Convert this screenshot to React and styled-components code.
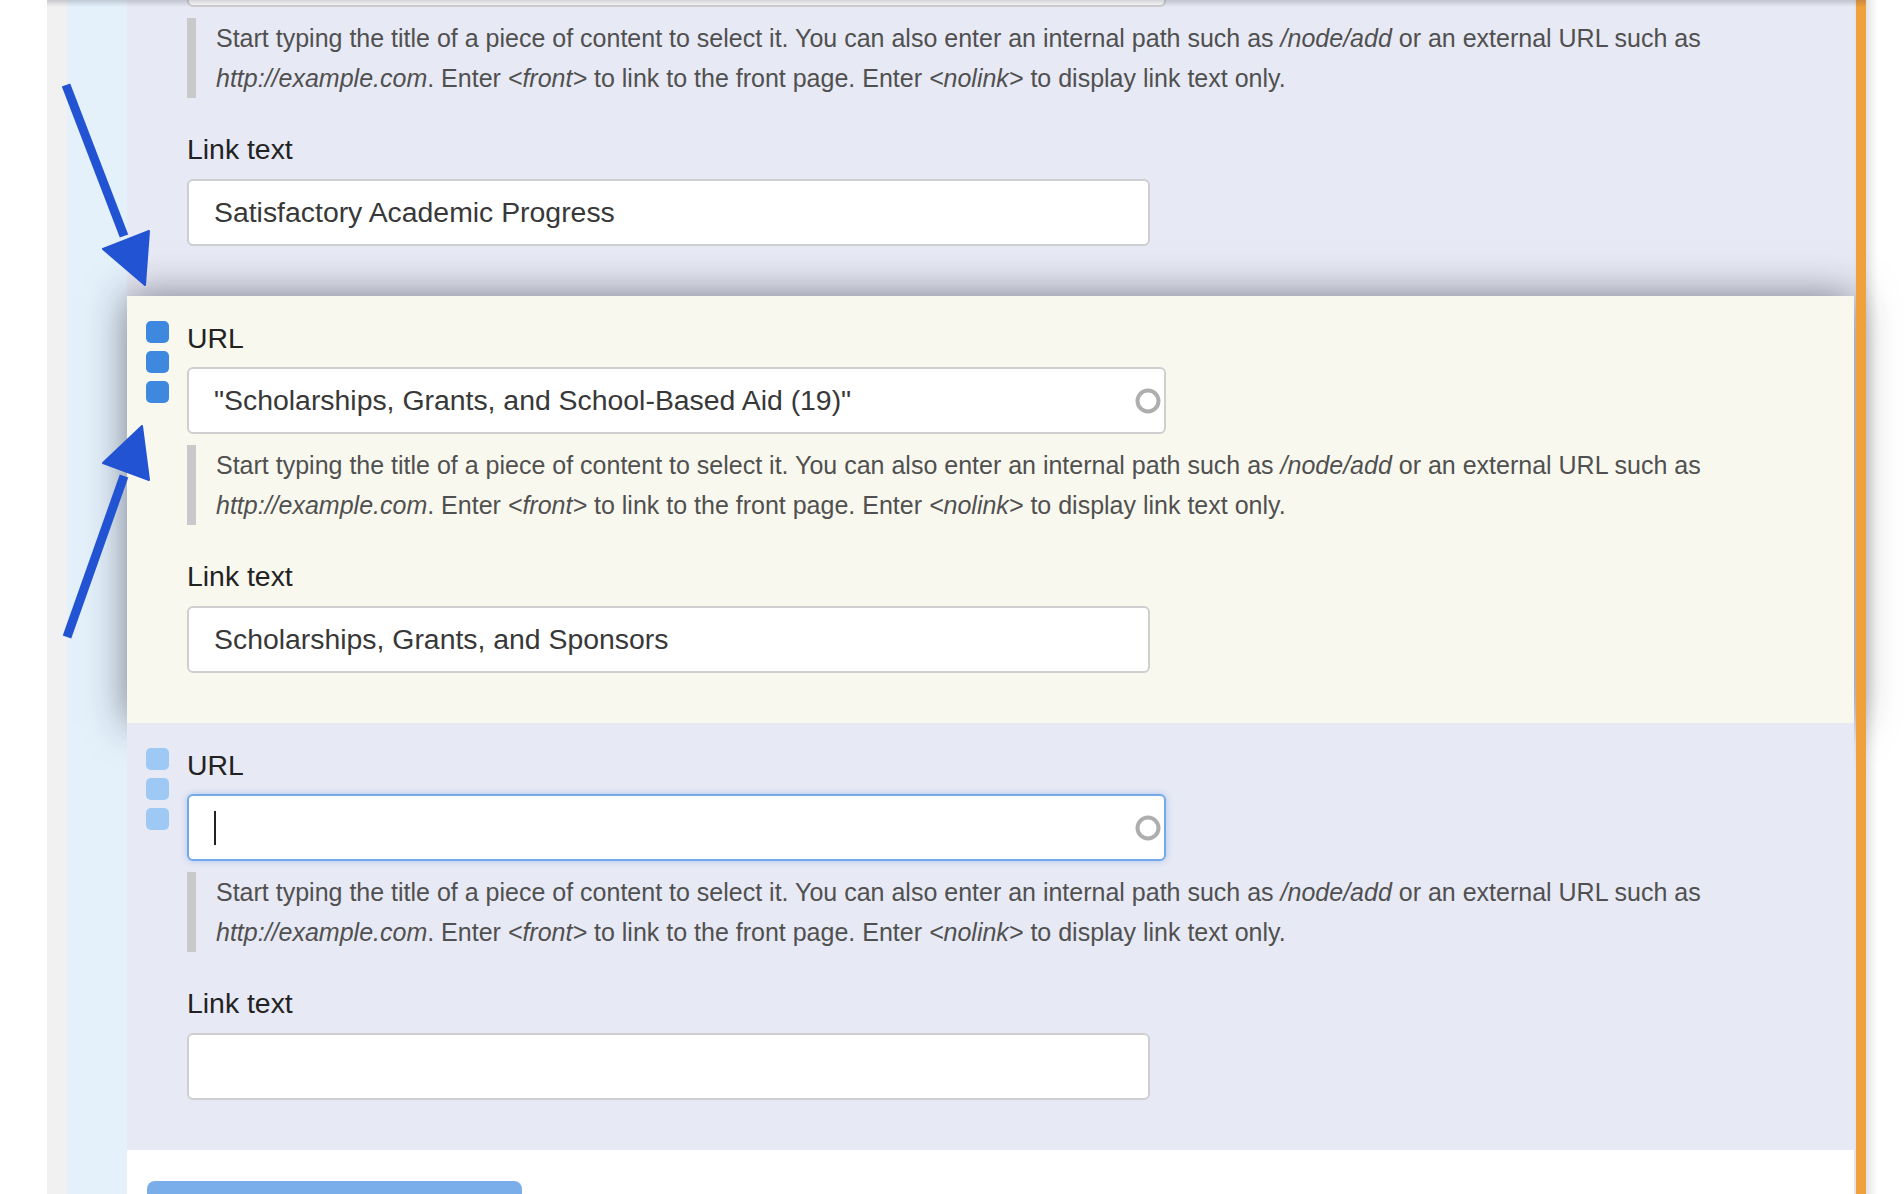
import React from "react";
import styled, { createGlobalStyle, css } from "styled-components";

const GlobalStyle = createGlobalStyle`
  html, body {
    margin: 0;
    padding: 0;
    overflow: hidden;
    background: #ffffff;
  }
  body {
    font-family: "Liberation Sans", Arial, Helvetica, sans-serif;
    color: #222;
  }
  * { box-sizing: border-box; }
`;

const Frame = styled.div`
  position: relative;
  display: flex;
  width: 100%;
  height: 100vh;
  overflow: hidden;
  background: #ffffff;
`;

const LeftGutter = styled.div`
  flex: 0 0 47px;
  background: #ffffff;
`;

const Workspace = styled.div`
  position: relative;
  flex: 0 0 1819px;
  display: flex;
  &::before {
    content: "";
    position: absolute;
    left: 0;
    right: 0;
    top: 0;
    height: 7px;
    background: linear-gradient(rgba(60, 60, 80, 0.22), rgba(60, 60, 80, 0));
    z-index: 3;
    pointer-events: none;
  }
`;

const Rail = styled.div`
  flex: 0 0 20px;
  background: #f1f1f1;
`;

const Canvas = styled.div`
  flex: 1;
  min-width: 0;
  display: flex;
  flex-direction: column;
  padding-left: 60px;
  padding-right: 2px;
  background: linear-gradient(to right, #e4f1fb 0, #e4f1fb 60px, #e2e5ef 60px);
`;

const OrangeBar = styled.div`
  flex: 0 0 10px;
  background: #f0a03c;
`;

const RightGutter = styled.div`
  flex: 1;
  background: linear-gradient(to right, #e2e2e2 0px, #f3f3f3 6px, #ffffff 12px, #ffffff 100%);
`;

const Form = styled.div`
  flex: 1;
  display: flex;
  flex-direction: column;
  margin-top: -131px;
  background: #ffffff;
`;

const toneStyles = {
  lavender: css`
    background: #e7e9f4;
  `,
  cream: css`
    background: #f9f8ef;
    box-shadow: 0 0 38px rgba(30, 30, 50, 0.55);
  `,
};

const Panel = styled.div`
  display: flex;
  gap: 18px;
  padding: 25px 40px 50px 19px;
  ${(p) => toneStyles[p.$tone]}
`;

const Handles = styled.div`
  flex: 0 0 23px;
  display: flex;
  flex-direction: column;
  gap: 8px;
`;

const Grip = styled.span`
  display: block;
  width: 23px;
  height: 22px;
  border-radius: 5px;
  background: ${(p) => (p.$on ? "#3e88df" : "#9dc9f4")};
`;

const Body = styled.div`
  flex: 1;
  min-width: 0;
  display: flex;
  flex-direction: column;
`;

const Label = styled.div`
  font-size: 28.4px;
  line-height: 34px;
  color: #222;
  margin-top: ${(p) => (p.$spaced ? "34px" : "0")};
`;

const Field = styled.div`
  display: flex;
  align-items: center;
  justify-content: space-between;
  width: ${(p) => p.$width}px;
  height: 67px;
  margin-top: ${(p) => p.$gap}px;
  padding: 0 2px 0 25px;
  background: #ffffff;
  border: 2px solid ${(p) => (p.$focused ? "#74a8e8" : "#cfcfd2")};
  border-radius: 6px;
  box-shadow: ${(p) =>
    p.$focused ? "0 0 6px rgba(90, 150, 230, 0.45)" : "none"};
  font-size: 28.4px;
  color: #383838;
  white-space: nowrap;
`;

const FieldText = styled.span`
  flex: 1;
  overflow: hidden;
`;

const Caret = styled.span`
  display: block;
  width: 2px;
  height: 34px;
  background: #222;
`;

const Spacer = styled.span`
  flex: 1;
`;

const Help = styled.div`
  margin-top: 11px;
  padding-left: 20px;
  border-left: 9px solid #c9c9cb;
  font-size: 25px;
  line-height: 40px;
  color: #505050;
  em {
    font-style: italic;
  }
`;

const ButtonRow = styled.div`
  padding: 31px 0 0 20px;
`;

const AddButton = styled.button`
  width: 375px;
  height: 56px;
  border: none;
  border-radius: 8px;
  background: #7aaeea;
`;

const ArrowLayer = styled.svg`
  position: absolute;
  left: 0;
  top: 0;
  width: 1904px;
  height: 1194px;
  pointer-events: none;
  z-index: 5;
`;

function Throbber() {
  return (
    <svg width="28" height="28" viewBox="0 0 28 28" aria-hidden="true">
      <defs>
        <filter id="soft" x="-20%" y="-20%" width="140%" height="140%">
          <feGaussianBlur stdDeviation="0.6" />
        </filter>
      </defs>
      <circle
        cx="14"
        cy="14"
        r="10.5"
        fill="none"
        stroke="#aeaeae"
        strokeWidth="4"
        filter="url(#soft)"
      />
    </svg>
  );
}

function HelpText() {
  return (
    <Help>
      Start typing the title of a piece of content to select it. You can also
      enter an internal path such as <em>/node/add</em> or an external URL such
      as <em>http://example.com</em>. Enter <em>&lt;front&gt;</em> to link to
      the front page. Enter <em>&lt;nolink&gt;</em> to display link text only.
    </Help>
  );
}

function FieldValue({ value }) {
  return value ? <FieldText>{value}</FieldText> : <Spacer />;
}

function LinkItem({ tone, gripOn, url, linkText, focused }) {
  return (
    <Panel $tone={tone}>
      <Handles>
        <Grip $on={gripOn} />
        <Grip $on={gripOn} />
        <Grip $on={gripOn} />
      </Handles>
      <Body>
        <Label>URL</Label>
        <Field $width={979} $gap={12} $focused={focused}>
          {focused ? (
            <>
              <Caret />
              <Spacer />
            </>
          ) : (
            <FieldValue value={url} />
          )}
          <Throbber />
        </Field>
        <HelpText />
        <Label $spaced>Link text</Label>
        <Field $width={963} $gap={13}>
          <FieldValue value={linkText} />
        </Field>
      </Body>
    </Panel>
  );
}

const items = [
  {
    id: 1,
    tone: "lavender",
    gripOn: false,
    url: "",
    linkText: "Satisfactory Academic Progress",
  },
  {
    id: 2,
    tone: "cream",
    gripOn: true,
    url: '"Scholarships, Grants, and School-Based Aid (19)"',
    linkText: "Scholarships, Grants, and Sponsors",
  },
  {
    id: 3,
    tone: "lavender",
    gripOn: false,
    url: "",
    linkText: "",
    focused: true,
  },
];

export default function App() {
  return (
    <>
      <GlobalStyle />
      <Frame>
        <LeftGutter />
        <Workspace>
          <Rail />
          <Canvas>
            <Form>
              {items.map((it) => (
                <LinkItem key={it.id} {...it} />
              ))}
              <ButtonRow>
                <AddButton type="button" aria-label="Add another item" />
              </ButtonRow>
            </Form>
          </Canvas>
          <OrangeBar />
        </Workspace>
        <RightGutter />
        <ArrowLayer viewBox="0 0 1904 1194">
          <g fill="#2253d2" stroke="#2253d2" strokeLinejoin="round">
            <line x1="66" y1="85" x2="124" y2="236" strokeWidth="9" />
            <polygon points="103,249 149,231 145,285" strokeWidth="2" />
            <line x1="67" y1="637" x2="124" y2="476" strokeWidth="9" />
            <polygon points="103,463 149,480 142,426" strokeWidth="2" />
          </g>
        </ArrowLayer>
      </Frame>
    </>
  );
}
